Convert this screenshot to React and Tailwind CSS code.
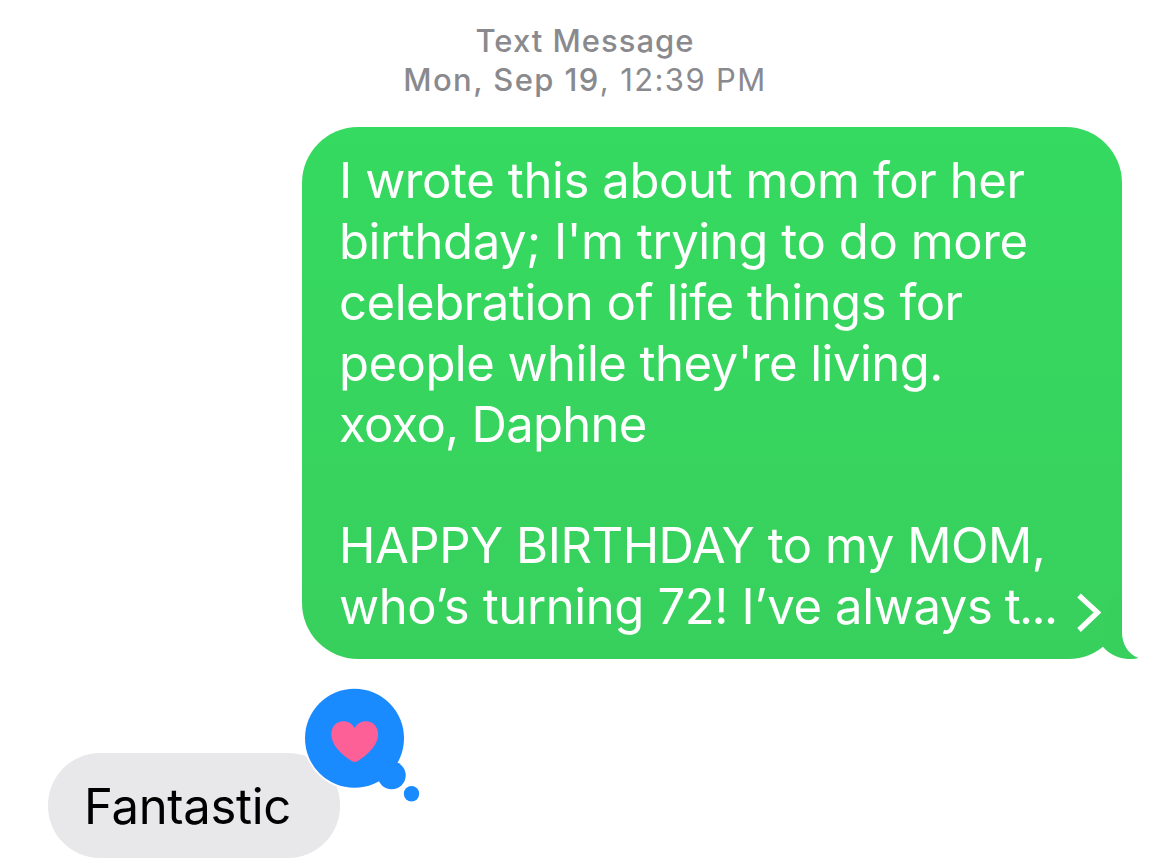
const sentLines = [
  { text: 'I wrote this about mom for her', className: 'tracking-[-0.4px]' },
  { text: "birthday; I'm trying to do more", className: 'tracking-[-0.41px]' },
  { text: 'celebration of life things for', className: 'tracking-[-0.45px]' },
  { text: "people while they're living.", className: 'tracking-[-0.52px]' },
  { text: 'xoxo, Daphne', className: 'tracking-[-0.72px]' },
  { text: '\u00a0', className: '' },
  { text: 'HAPPY BIRTHDAY to my MOM,', className: 'tracking-[-0.46px]' },
  { text: 'who’s turning 72! I’ve always', className: 'tracking-[-0.38px]', tail: ' t...' },
]

function Timestamp() {
  return (
    <header className="flex flex-col items-center pt-[21px] text-[31px] leading-[39px] text-[#8a8a8e]">
      <span className="font-medium tracking-[1px]">Text Message</span>
      <span className="tracking-[1.4px]">
        <span className="font-medium">Mon, Sep 19</span>, 12:39 PM
      </span>
    </header>
  )
}

function BubbleTail() {
  return (
    <svg className="absolute right-[-17px] bottom-0" width="60" height="60" viewBox="0 0 60 60" fill="#38d05d">
      <path d="M30 0H43V33C43 45 49 55 59.500 59C45 62.500 31 57 23.800 47.600Z" />
    </svg>
  )
}

function SentBubble() {
  return (
    <div className="relative ml-[302px] mt-[28px] h-[532px] w-[820px] rounded-[56px] rounded-br-[53px] bg-linear-to-b from-[#35da60] to-[#38d05d] pl-[37px] pt-[24px] text-[49px] leading-[60.9px] text-white">
      {sentLines.map((line, i) => (
        <p key={i} className="whitespace-nowrap">
          <span className={line.className}>{line.text}</span>
          {line.tail && <span className="tracking-[-1.6px]">{line.tail}</span>}
        </p>
      ))}
      <BubbleTail />
      <svg className="absolute right-[18px] bottom-[25px]" width="28" height="42" viewBox="0 0 28 42" fill="none" stroke="white" strokeWidth="5.200">
        <path d="M3 3.500L21.500 20.500L3 38" />
      </svg>
    </div>
  )
}

function HeartReaction() {
  return (
    <svg className="absolute left-[255px] top-[-66px]" width="120" height="118" viewBox="0 0 120 118">
      <circle cx="51.500" cy="51.300" r="51.300" fill="white" />
      <g fill="#1a8aff">
        <circle cx="51.500" cy="51.300" r="49.500" />
        <circle cx="88.700" cy="88.300" r="14" />
        <circle cx="108.500" cy="106.800" r="7.700" />
      </g>
      <path
        fill="#fc6097"
        d="M51.700 41C49.500 36.800 45 34.300 40.500 34.300C33.500 34.300 28.300 39.500 28.300 47.500C28.300 58 38 67 48.500 74Q51.700 76 54.900 74C65.400 67 75.100 58 75.100 47.500C75.100 39.500 69.900 34.300 62.900 34.300C58.400 34.300 53.900 36.800 51.700 41Z"
      />
    </svg>
  )
}

function ReceivedBubble() {
  return (
    <div className="relative ml-12 mt-[94px] h-[105px] w-[292px] rounded-[52px] bg-[#e8e8ea] pl-[36px] pt-[23px] text-[49px] leading-[61px] text-black">
      <span className="tracking-[-0.3px]">Fantastic</span>
      <HeartReaction />
    </div>
  )
}

export default function App() {
  return (
    <main className="h-[858px] w-[1170px] overflow-hidden bg-white font-['Inter',sans-serif]">
      <Timestamp />
      <SentBubble />
      <ReceivedBubble />
    </main>
  )
}
